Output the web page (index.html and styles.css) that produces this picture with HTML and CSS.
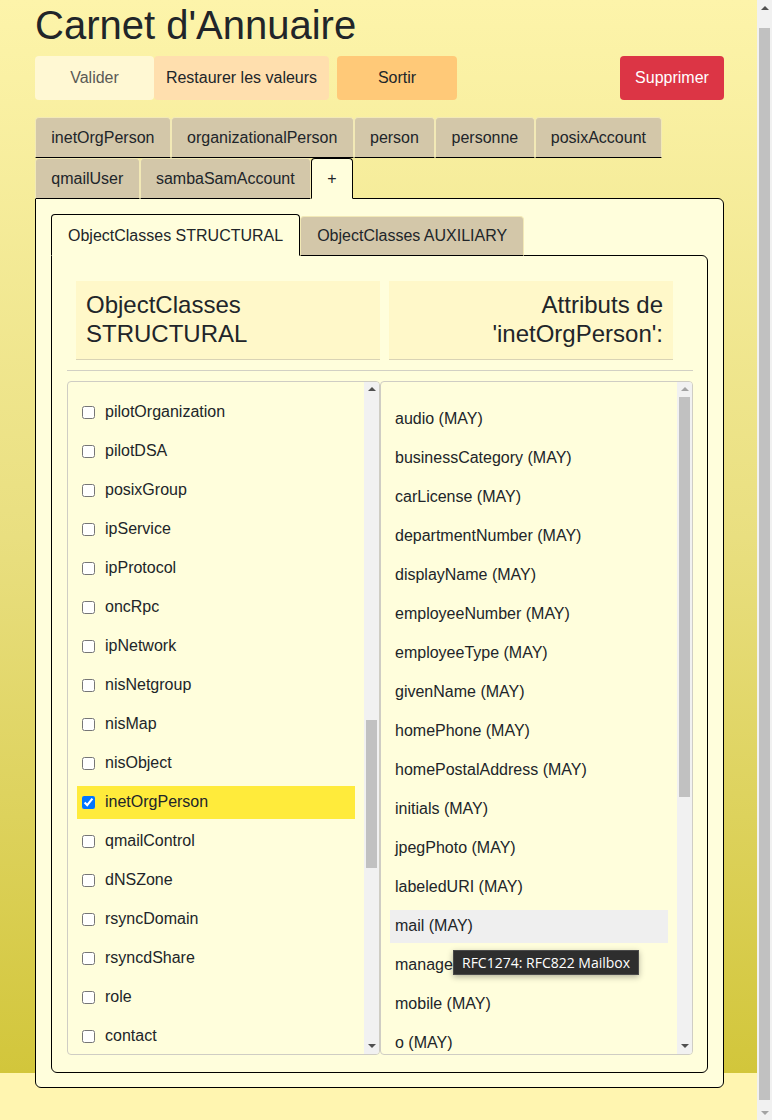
FILE: index.html
```html
<!DOCTYPE html>
<html lang="fr">
<head>
<meta charset="utf-8">
<title>Carnet d'Annuaire</title>
<link rel="stylesheet" href="styles.css">
</head>
<body>
<div class="page">
  <h1 class="title">Carnet d'Annuaire</h1>
  <div class="actions">
    <button class="btn btn-valider">Valider</button>
    <button class="btn btn-restore">Restaurer les valeurs</button>
    <button class="btn btn-sortir">Sortir</button>
    <button class="btn btn-delete">Supprimer</button>
  </div>

  <ul class="tabs">
    <li class="tab">inetOrgPerson</li>
    <li class="tab">organizationalPerson</li>
    <li class="tab">person</li>
    <li class="tab">personne</li>
    <li class="tab">posixAccount</li>
    <li class="tab">qmailUser</li>
    <li class="tab">sambaSamAccount</li>
    <li class="tab tab-active">+</li>
  </ul>
  <div class="panel">
    <ul class="tabs subtabs">
      <li class="tab tab-active">ObjectClasses STRUCTURAL</li>
      <li class="tab">ObjectClasses AUXILIARY</li>
    </ul>
    <div class="panel inner">
      <div class="heads">
        <div class="head head-left">ObjectClasses STRUCTURAL</div>
        <div class="head head-right">Attributs de 'inetOrgPerson':</div>
      </div>
      <hr class="sep">
      <div class="lists">
        <div class="listbox">
          <div class="viewport left-view">
            <label class="row"><input type="checkbox"><span>pilotOrganization</span></label>
            <label class="row"><input type="checkbox"><span>pilotDSA</span></label>
            <label class="row"><input type="checkbox"><span>posixGroup</span></label>
            <label class="row"><input type="checkbox"><span>ipService</span></label>
            <label class="row"><input type="checkbox"><span>ipProtocol</span></label>
            <label class="row"><input type="checkbox"><span>oncRpc</span></label>
            <label class="row"><input type="checkbox"><span>ipNetwork</span></label>
            <label class="row"><input type="checkbox"><span>nisNetgroup</span></label>
            <label class="row"><input type="checkbox"><span>nisMap</span></label>
            <label class="row"><input type="checkbox"><span>nisObject</span></label>
            <label class="row row-selected"><input type="checkbox" checked><span>inetOrgPerson</span></label>
            <label class="row"><input type="checkbox"><span>qmailControl</span></label>
            <label class="row"><input type="checkbox"><span>dNSZone</span></label>
            <label class="row"><input type="checkbox"><span>rsyncDomain</span></label>
            <label class="row"><input type="checkbox"><span>rsyncdShare</span></label>
            <label class="row"><input type="checkbox"><span>role</span></label>
            <label class="row"><input type="checkbox"><span>contact</span></label>
          </div>
          <div class="sbar">
            <div class="sbtn"><span class="arrow-up"></span></div>
            <div class="strack"><div class="sthumb thumb-left"></div></div>
            <div class="sbtn"><span class="arrow-down"></span></div>
          </div>
        </div>
        <div class="listbox">
          <div class="viewport right-view">
            <div class="row attr">audio (MAY)</div>
            <div class="row attr">businessCategory (MAY)</div>
            <div class="row attr">carLicense (MAY)</div>
            <div class="row attr">departmentNumber (MAY)</div>
            <div class="row attr">displayName (MAY)</div>
            <div class="row attr">employeeNumber (MAY)</div>
            <div class="row attr">employeeType (MAY)</div>
            <div class="row attr">givenName (MAY)</div>
            <div class="row attr">homePhone (MAY)</div>
            <div class="row attr">homePostalAddress (MAY)</div>
            <div class="row attr">initials (MAY)</div>
            <div class="row attr">jpegPhoto (MAY)</div>
            <div class="row attr">labeledURI (MAY)</div>
            <div class="row attr row-hover">mail (MAY)
              <div class="tooltip">RFC1274: RFC822 Mailbox</div>
            </div>
            <div class="row attr">manager (MAY)</div>
            <div class="row attr">mobile (MAY)</div>
            <div class="row attr">o (MAY)</div>
          </div>
          <div class="sbar">
            <div class="sbtn"><span class="arrow-up arrow-off"></span></div>
            <div class="strack"><div class="sthumb thumb-right"></div></div>
            <div class="sbtn"><span class="arrow-down"></span></div>
          </div>
        </div>
      </div>
    </div>
  </div>
</div>
<div class="page-sbar">
  <div class="sbtn"><span class="arrow-up"></span></div>
  <div class="strack"><div class="sthumb thumb-page"></div></div>
  <div class="sbtn"><span class="arrow-down arrow-off-down"></span></div>
</div>
</body>
</html>
```
FILE: styles.css
```css
html {
  background: #fff5b0;
}
body {
  margin: 0;
  min-height: 1140px;
  background: linear-gradient(180deg, #fdf4aa 0%, #e9df80 50%, #d2c63b 100%) 0 0 / 100% 1073px no-repeat, #fff5b0;
  font-family: "Liberation Sans", Arial, sans-serif;
  color: #212529;
}
.page {
  width: 689px;
  padding: 1px 0 0 35px;
}
.title {
  margin: 0 0 7px;
  font-size: 40px;
  line-height: 48px;
  font-weight: 400;
}
.actions {
  display: flex;
  height: 44px;
}
.btn {
  height: 44px;
  border: 0;
  border-radius: 4px;
  font-family: inherit;
  font-size: 16px;
  color: #212529;
  padding: 0;
  white-space: nowrap;
}
.btn-valider {
  width: 119px;
  background: #fff8d3;
  color: #5a5a55;
}
.btn-restore {
  width: 175px;
  background: #ffdfae;
}
.btn-sortir {
  width: 120px;
  margin-left: 8px;
  background: #ffc978;
}
.btn-delete {
  margin-left: auto;
  width: 104px;
  background: #dc3545;
  color: #fff;
}
.tabs {
  list-style: none;
  margin: 17px 0 -1px;
  padding: 0;
  display: flex;
  flex-wrap: wrap;
  position: relative;
  z-index: 1;
}
.tab {
  height: 41px;
  box-sizing: border-box;
  display: flex;
  align-items: center;
  padding: 0 15.3px;
  font-size: 16px;
  background: #d3c7a9;
  border: 1px solid #f2e9b6;
  border-bottom-color: #000;
  border-radius: 4px 4px 0 0;
}
.tab-active {
  background: #fffedc;
  border-color: #000;
  border-bottom-color: #fffedc;
}
.panel {
  background: #fffedc;
  border: 1px solid #000;
  border-radius: 0 6px 6px 6px;
  padding: 15px 15px 14px;
}
.subtabs {
  margin-top: 0;
  align-items: flex-end;
}
.subtabs .tab {
  padding: 0 16px;
  height: 40px;
}
.subtabs .tab-active {
  height: 42px;
  padding-top: 1px;
}
.inner {
  padding: 15px 14px 17px 15px;
}
.heads {
  margin-top: 10px;
  display: grid;
  grid-template-columns: 313px 313px;
}
.head {
  padding: 10px;
  font-size: 24px;
  line-height: 28.8px;
  background: #fff8c9;
  border-bottom: 1px solid #d9d3b5;
}
.head-left {
  margin-left: 9px;
}
.head-right {
  margin: 0 20px 0 9px;
  text-align: right;
}
.sep {
  margin: 10px 0 0;
  border: 0;
  border-top: 1px solid #d2d0c4;
  height: 0;
}
.lists {
  margin-top: 10px;
  display: grid;
  grid-template-columns: 313px 313px;
}
.listbox {
  height: 674px;
  box-sizing: border-box;
  border: 1px solid #cfcdc4;
  border-radius: 4px;
  display: flex;
  overflow: hidden;
}
.viewport {
  flex: 1;
  overflow: hidden;
  padding: 0 9px;
}
.left-view {
  padding-top: 14px;
}
.right-view {
  padding-top: 21px;
}
.row {
  height: 33px;
  margin-bottom: 6px;
  display: flex;
  align-items: center;
  padding-left: 5px;
  font-size: 16px;
}
.row input {
  width: 13px;
  height: 13px;
  margin: 0 10px 0 0;
}
.row-selected {
  background: #ffeb3b;
}
.row-hover {
  background: #efefef;
  position: relative;
}
.tooltip {
  position: absolute;
  top: 40px;
  left: 63px;
  height: 25px;
  box-sizing: border-box;
  padding: 0 8px;
  display: flex;
  align-items: center;
  background: #2e2e2e;
  border: 1px solid #4a4a4a;
  color: #fff;
  font-family: "Open Sans", "Noto Sans", sans-serif;
  font-size: 14px;
  white-space: nowrap;
  box-shadow: 0 2px 6px rgba(0, 0, 0, 0.3);
  z-index: 5;
}
.sbar {
  width: 15px;
  background: #f1f1f1;
  display: flex;
  flex-direction: column;
}
.sbtn {
  height: 15px;
  display: flex;
  align-items: center;
  justify-content: center;
}
.arrow-up {
  width: 0;
  height: 0;
  border-left: 4px solid transparent;
  border-right: 4px solid transparent;
  border-bottom: 4px solid #505050;
}
.arrow-down {
  width: 0;
  height: 0;
  border-left: 4px solid transparent;
  border-right: 4px solid transparent;
  border-top: 4px solid #505050;
}
.arrow-off {
  border-bottom-color: #a3a3a3;
}
.arrow-off-down {
  border-top-color: #a3a3a3;
}
.strack {
  flex: 1;
}
.sthumb {
  margin: 0 2px;
  background: #c1c1c1;
}
.thumb-left {
  margin-top: 323px;
  height: 148px;
}
.thumb-right {
  margin-top: 0;
  height: 400px;
}
.page-sbar {
  position: fixed;
  top: 0;
  right: 0;
  bottom: 0;
  width: 15px;
  background: #f1f1f1;
  display: flex;
  flex-direction: column;
  z-index: 10;
}
.thumb-page {
  margin-top: 13px;
  height: 1072px;
}
```
